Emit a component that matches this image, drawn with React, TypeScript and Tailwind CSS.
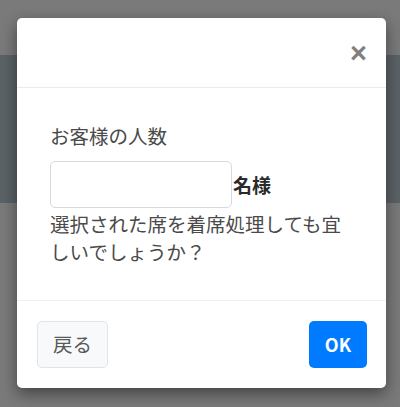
import React from 'react';

const font = { fontFamily: '"Noto Sans CJK JP", "Noto Sans", sans-serif' };

const App = () => {
  return (
    <div className="relative h-[407px] w-[400px] overflow-hidden bg-[#7a7a7a]" style={font}>
      {/* page behind the backdrop */}
      <div className="mt-[55px] h-[148px] w-full bg-[#5b6267]" />

      {/* Modal */}
      <div className="absolute left-[17px] top-[18px] flex h-[370px] w-[369px] flex-col rounded-[5px] bg-white shadow-[0_6px_16px_rgba(0,0,0,0.45)]">
        {/* Header */}
        <div className="flex h-[70px] items-center justify-end border-b border-[#e9ecef] pr-[19px]">
          <button className="mt-[2px] text-[29px] leading-none font-bold text-[#808080]" style={{ fontFamily: '"Liberation Sans", Arial, sans-serif' }}>
            ×
          </button>
        </div>

        {/* Body */}
        <div className="flex-1 px-[33px] pt-[34px] text-[19.5px] leading-[28px] text-[#4a4a4a]">
          <div>お客様の人数</div>
          <div className="mt-[11px] flex items-center">
            <input
              type="text"
              className="h-[47px] w-[182px] rounded-[5px] border border-[#d6dadf] bg-white px-3 outline-none"
            />
            <span className="ml-px text-[19px] font-bold text-[#2a2a2a]">名様</span>
          </div>
          <div className="mt-[2px]">選択された席を着席処理しても宜しいでしょうか？</div>
        </div>

        {/* Footer */}
        <div className="flex h-[88px] items-center justify-between border-t border-[#eef0f2] px-[20px] pb-px">
          <button className="h-[47px] rounded-[5px] border border-[#e1e4e8] bg-[#f8f9fa] px-[15px] text-[19.5px] text-[#5a5a5a]">
            戻る
          </button>
          <button className="mr-[-1px] h-[47px] rounded-[5px] bg-[#007bff] px-[16px] text-[18px] font-bold text-white">
            OK
          </button>
        </div>
      </div>
    </div>
  );
};

export default App;
